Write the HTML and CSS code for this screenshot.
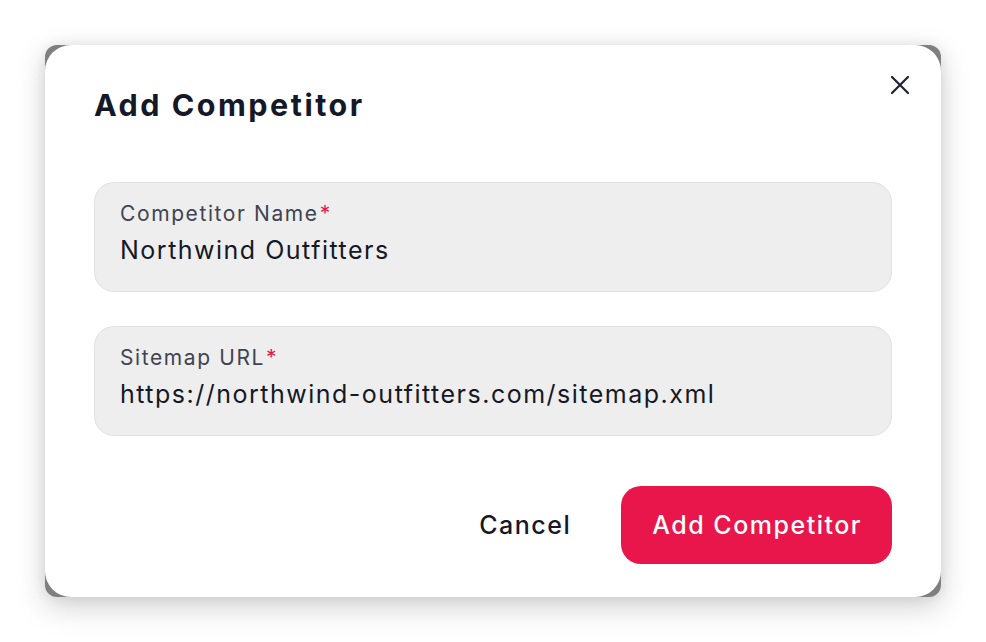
FILE: index.html
```html
<!DOCTYPE html>
<html lang="en">
<head>
	<meta charset="UTF-8">
	<meta name="viewport" content="width=device-width, initial-scale=1.0">
	<title>Add Competitor</title>
	<link rel="stylesheet" href="styles.css">
</head>
<body>
	<main class="stage">
		<div class="modal-frame">
			<section class="modal">
				<header class="modal-head">
					<h1>Add Competitor</h1>
					<button class="close" aria-label="Close">
						<svg width="20" height="20" viewBox="0 0 20 20"><path d="M2 2 L18 18 M18 2 L2 18" stroke="#1e2130" stroke-width="2.2" stroke-linecap="round"/></svg>
					</button>
				</header>
				<div class="field">
					<label>Competitor Name<span class="req">*</span></label>
					<div class="value">Northwind Outfitters</div>
				</div>
				<div class="field">
					<label>Sitemap URL<span class="req">*</span></label>
					<div class="value">https://northwind-outfitters.com/sitemap.xml</div>
				</div>
				<footer class="actions">
					<button class="btn-cancel">Cancel</button>
					<button class="btn-add">Add Competitor</button>
				</footer>
			</section>
		</div>
	</main>
</body>
</html>
```

FILE: styles.css
```css
body,main,section,header,footer,div,h1,label{
	margin: 0; padding: 0;
}
body{
	background: #fff;
	font-family: Inter, "Noto Sans", sans-serif;
	color: #151826;
}
.stage{
	width: 986px; height: 642px;
	padding: 45px 0 0 45px;
	box-sizing: border-box;
}
.modal-frame{
	width: 896px; height: 552px;
	background: #7f7f7f;
	border-radius: 12px;
	box-shadow: 0 10px 30px rgba(0,0,0,.18), 0 0 14px rgba(0,0,0,.08);
}
.modal{
	height: 100%;
	background: #fff;
	border-radius: 26px;
	padding: 0 49px;
	box-sizing: border-box;
	display: flex; flex-direction: column;
}
.modal-head{
	display: flex; justify-content: space-between; align-items: flex-start;
	padding-top: 36px;
	margin-bottom: 53px;
}
.modal-head h1{
	font-size: 30.5px; font-weight: 700;
	letter-spacing: 2.5px;
	line-height: 48px;
	color: #151826;
}
.close{
	border: 0; background: none; padding: 0;
	margin: -6px -18px 0 0;
	width: 20px; height: 20px;
}
.field{
	height: 110px;
	background: #eeeeef;
	border: 1px solid #e1e1e3;
	border-radius: 20px;
	box-sizing: border-box;
	padding: 17px 25px 0;
	margin-bottom: 34px;
}
.field label{
	display: block;
	font-size: 21px;
	letter-spacing: 1.6px;
	line-height: 28px;
	color: #40444f;
}
.req{ color: #e8164a; margin-left: 1px; }
.field .value{
	margin-top: 6px;
	font-size: 25px;
	letter-spacing: 1.5px;
	line-height: 32px;
	color: #151826;
}
.actions{
	display: flex; justify-content: flex-end; align-items: center;
	gap: 50px;
	margin-top: 16px;
}
.actions button{
	font-family: inherit;
	font-size: 25px;
	font-weight: 500;
	letter-spacing: 1.5px;
	border: 0;
	cursor: pointer;
}
.btn-cancel{
	background: none;
	color: #151826;
	padding: 0;
}
.btn-add{
	background: #e8164a;
	color: #fff;
	height: 78px;
	padding: 0 30px 0 31px;
	border-radius: 20px;
}
```
